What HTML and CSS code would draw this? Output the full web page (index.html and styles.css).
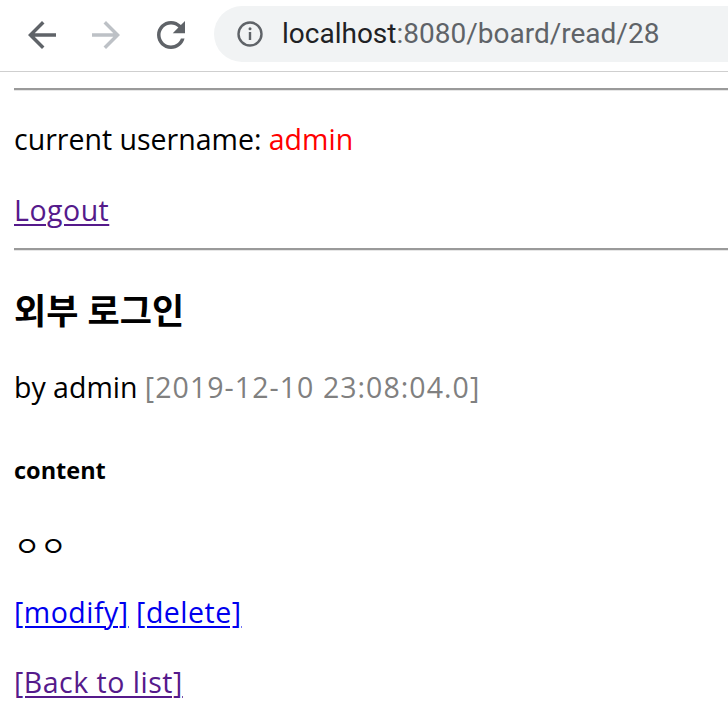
FILE: index.html
```html
<!DOCTYPE html>
<html lang="ko">
<head>
<meta charset="utf-8">
<title>board read</title>
<link rel="stylesheet" href="styles.css">
</head>
<body>
<header class="toolbar">
  <nav class="nav">
    <svg class="nav-icon nav-back" viewBox="0 0 24 24"><path d="M20 11H7.83l5.59-5.59L12 4l-8 8 8 8 1.41-1.41L7.83 13H20v-2z"/></svg>
    <svg class="nav-icon nav-forward" viewBox="0 0 24 24"><path d="M4 11h12.17l-5.59-5.59L12 4l8 8-8 8-1.41-1.41L16.17 13H4v-2z"/></svg>
    <svg class="nav-icon nav-reload" viewBox="0 0 24 24"><path d="M17.65 6.35C16.2 4.9 14.21 4 12 4c-4.42 0-7.99 3.58-7.99 8s3.57 8 7.99 8c3.73 0 6.84-2.55 7.73-6h-2.08c-.82 2.33-3.04 4-5.65 4-3.31 0-6-2.69-6-6s2.69-6 6-6c1.66 0 3.14.69 4.22 1.78L13 11h7V4l-2.35 2.35z"/></svg>
  </nav>
  <div class="omnibox">
    <svg class="info" viewBox="0 0 28 28"><circle cx="14" cy="14" r="11.5" fill="none" stroke="#5f6368" stroke-width="2.4"/><rect x="12.8" y="12" width="2.4" height="8" fill="#5f6368"/><circle cx="14" cy="8.8" r="1.5" fill="#5f6368"/></svg>
    <span class="url"><span class="host">localhost</span><span class="path">:8080/board/read/28</span></span>
  </div>
</header>
<main class="page">
  <hr class="rule">
  <p class="line user">current username: <span class="name">admin</span></p>
  <p class="line logout"><a class="link visited" href="#">Logout</a></p>
  <hr class="rule second">
  <h3 class="title">외부 로그인</h3>
  <p class="line meta">by admin <span class="date">[2019-12-10 23:08:04.0]</span></p>
  <h4 class="label">content</h4>
  <p class="line body">ㅇㅇ</p>
  <p class="line actions"><a class="link" href="#">[modify]</a> <a class="link" href="#">[delete]</a></p>
  <p class="line back-line"><a class="link visited" href="#">[Back to list]</a></p>
</main>
</body>
</html>
```
FILE: styles.css
```css
html, body {
  margin: 0;
  padding: 0;
  background: #ffffff;
}

body {
  font-family: "Open Sans", "Noto Sans CJK KR", sans-serif;
  color: #000000;
  overflow: hidden;
}

.toolbar {
  height: 71px;
  border-bottom: 1px solid #cfcfcf;
  display: flex;
  align-items: center;
  background: #ffffff;
}

.nav {
  display: flex;
  align-items: center;
  gap: 22px;
  padding-left: 21px;
  margin-top: -2px;
}

.nav-icon {
  width: 42px;
  height: 42px;
  display: block;
}

.nav-back { fill: #5f6368; }
.nav-forward { fill: #bdc1c6; }
.nav-reload { fill: #5f6368; margin-left: 1px; }

.omnibox {
  margin-left: 22px;
  height: 56px;
  flex: 1;
  background: #f1f3f4;
  border-radius: 28px 0 0 28px;
  display: flex;
  align-items: center;
  padding-left: 22px;
  margin-top: -3px;
}

.info {
  width: 28px;
  height: 28px;
  display: block;
}

.url {
  margin-left: 18px;
  font-family: Roboto, "Liberation Sans", sans-serif;
  font-size: 28px;
  line-height: 34px;
  white-space: nowrap;
}

.host { color: #202124; }
.path { color: #5f6368; }

.page {
  padding-left: 14px;
}

.rule {
  margin: 16px 0 0 0;
  height: 0;
  border: 0;
  border-top: 2px solid #9a9a9a;
  border-bottom: 1px solid #e6e6e6;
}

.rule.second {
  margin-top: 20px;
}

.line {
  margin: 0;
  font-size: 28.5px;
  line-height: 36px;
}

.user { margin-top: 30px; }
.logout { margin-top: 35px; }

.name { color: #ff0000; }

.link {
  color: #0000ee;
  letter-spacing: 0.5px;
  text-decoration: underline;
  text-decoration-thickness: 2px;
  text-underline-offset: 3px;
}

.link.visited { color: #551a8b; }

.title {
  margin: 40px 0 0 0;
  font-size: 35px;
  line-height: 40px;
  font-weight: 700;
}

.meta { margin-top: 38px; }
.date { color: #808080; letter-spacing: 1.05px; }

.label {
  margin: 50px 0 0 0;
  font-size: 23.5px;
  line-height: 30px;
  font-weight: 700;
}

.body { margin-top: 43px; }
.actions { margin-top: 30px; }
.back-line { margin-top: 34px; }
```
